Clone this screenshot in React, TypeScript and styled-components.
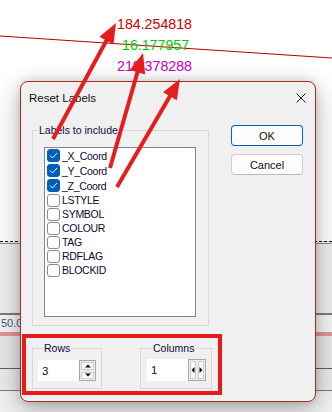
import React from "react";
import styled, { createGlobalStyle } from "styled-components";

const GlobalStyle = createGlobalStyle`
  html, body { margin: 0; padding: 0; background: #fff; }
  body { font-family: "Liberation Sans", Arial, sans-serif; }
`;

const values = [
  { text: "184.254818", color: "#c80000", x: 117, y: 16 },
  { text: "16.177957", color: "#00cc00", x: 122, y: 37 },
  { text: "219.378288", color: "#c400c4", x: 117, y: 58 },
];

const labels = [
  { name: "_X_Coord", checked: true },
  { name: "_Y_Coord", checked: true },
  { name: "_Z_Coord", checked: true },
  { name: "LSTYLE", checked: false },
  { name: "SYMBOL", checked: false },
  { name: "COLOUR", checked: false },
  { name: "TAG", checked: false },
  { name: "RDFLAG", checked: false },
  { name: "BLOCKID", checked: false },
];

// tail -> tip
const arrows = [
  [53, 139, 116, 23],
  [110, 168, 143, 53],
  [117, 187, 180, 79],
];

const arrowParts = (x1: number, y1: number, x2: number, y2: number) => {
  const dx = x2 - x1;
  const dy = y2 - y1;
  const len = Math.hypot(dx, dy);
  const ux = dx / len;
  const uy = dy / len;
  const bx = x2 - ux * 20;
  const by = y2 - uy * 20;
  const nx = -uy * 8;
  const ny = ux * 8;
  return {
    line: { x1, y1, x2: bx + ux * 2, y2: by + uy * 2 },
    head: `${x2},${y2} ${bx + nx},${by + ny} ${bx - nx},${by - ny}`,
  };
};

const Scene = styled.div`
  position: relative;
  width: 332px;
  height: 412px;
  overflow: hidden;
  background: #fff;
`;

const Backdrop = styled.div`
  display: flex;
  flex-direction: column;
  height: 100%;
`;

const CanvasArea = styled.div`
  position: relative;
  height: 241px;
  background: #fff;
  flex-shrink: 0;
`;

const ValueLabel = styled.span<{ $color: string }>`
  position: absolute;
  font-size: 14.2px;
  line-height: 16px;
  color: ${(p) => p.$color};
  white-space: nowrap;
`;

const LowerPanel = styled.div`
  display: flex;
  flex-direction: column;
  flex: 1;
  background: #f2f2f2;
`;

const DashRule = styled.div`
  height: 1px;
  border-top: 1px dashed #111;
  border-bottom: 1px solid #8a8a8a;
`;

const Band = styled.div<{ $h: number; $bg: string }>`
  height: ${(p) => p.$h}px;
  background: ${(p) => p.$bg};
  flex-shrink: 0;
`;

const ScaleRow = styled.div`
  height: 17px;
  background: #f6f6f6;
  font-size: 11px;
  line-height: 17px;
  color: #3d5b85;
  padding-left: 1px;
`;

const Dialog = styled.div`
  position: absolute;
  left: 20px;
  top: 81px;
  width: 296px;
  height: 321px;
  box-sizing: border-box;
  border: 1px solid #a3301d;
  border-radius: 8px;
  background: #f0f0f0;
  box-shadow: 0 8px 28px rgba(0, 0, 0, 0.3), 0 0 8px rgba(0, 0, 0, 0.14);
  display: flex;
  flex-direction: column;
`;

const TitleBar = styled.div`
  height: 31px;
  display: flex;
  align-items: center;
  justify-content: space-between;
  padding: 0 9px 0 8px;
  font-size: 11.5px;
  color: #111;
`;

const Body = styled.div`
  padding: 11px 11px 0 11px;
  display: flex;
  flex-direction: column;
`;

const TopRow = styled.div`
  display: flex;
  gap: 22px;
  align-items: flex-start;
`;

const Group = styled.fieldset<{ $w: number; $h?: number; $pad: string }>`
  margin: 0;
  width: ${(p) => p.$w}px;
  ${(p) => (p.$h ? `height: ${p.$h}px;` : "")}
  box-sizing: border-box;
  border: 1px solid #d8d8d8;
  padding: ${(p) => p.$pad};
  min-inline-size: 0;
`;

const Legend = styled.legend`
  margin-left: 5px;
  padding: 0 1px;
  font-size: 10.5px;
  line-height: 13px;
  color: #0c0c40;
`;

const ListBox = styled.div`
  margin: 10px 0 0 11px;
  width: 152px;
  height: 170px;
  box-sizing: border-box;
  border: 1px solid #828790;
  background: #fff;
  padding: 0 2px;
`;

const ItemRow = styled.div<{ $h: number }>`
  height: ${(p) => p.$h}px;
  display: flex;
  align-items: center;
  gap: 2px;
  font-size: 10.5px;
  letter-spacing: -0.3px;
  color: #0a0a30;
`;

const CheckBox = styled.span<{ $checked: boolean }>`
  width: 13px;
  height: 13px;
  box-sizing: border-box;
  border-radius: 3px;
  border: 1px solid ${(p) => (p.$checked ? "#005fb8" : "#8a8a8a")};
  background: ${(p) => (p.$checked ? "#005fb8" : "#fff")};
  display: flex;
  align-items: center;
  justify-content: center;
  flex-shrink: 0;
`;

const ButtonCol = styled.div`
  margin-top: 1px;
  display: flex;
  flex-direction: column;
  gap: 8px;
`;

const Button = styled.div<{ $primary?: boolean }>`
  width: 72px;
  height: 21px;
  box-sizing: border-box;
  border: 1px solid ${(p) => (p.$primary ? "#0067c0" : "#d0d0d0")};
  border-bottom-color: ${(p) => (p.$primary ? "#0058a8" : "#bcbcbc")};
  border-radius: 4px;
  background: #fdfdfd;
  font-size: 11px;
  color: #111;
  display: flex;
  align-items: center;
  justify-content: center;
`;

const BottomRow = styled.div`
  margin-top: 16px;
  display: flex;
  gap: 38px;
`;

const SpinField = styled.div`
  display: flex;
`;

const TextBox = styled.div<{ $w: number; $h: number }>`
  width: ${(p) => p.$w}px;
  height: ${(p) => p.$h}px;
  background: #fff;
  font-size: 11.5px;
  color: #111;
  padding-left: 4px;
  box-sizing: border-box;
  display: flex;
  align-items: center;
`;

const Spinner = styled.div<{ $horizontal?: boolean; $w: number; $h: number }>`
  width: ${(p) => p.$w}px;
  height: ${(p) => p.$h}px;
  box-sizing: border-box;
  border: 1px solid #a8a8a8;
  background: #ececec;
  display: flex;
  flex-direction: ${(p) => (p.$horizontal ? "row" : "column")};
`;

const SpinButton = styled.div`
  flex: 1;
  margin: 1px;
  border: 1px solid #cfcfcf;
  background: #f8f8f8;
  display: flex;
  align-items: center;
  justify-content: center;
`;

const ArrowLayer = styled.svg`
  position: absolute;
  left: 0;
  top: 0;
  pointer-events: none;
`;

const Highlight = styled.div`
  position: absolute;
  left: 22px;
  top: 334px;
  width: 200px;
  height: 61px;
  box-sizing: border-box;
  border: 4px solid #e81a1c;
  pointer-events: none;
`;

const Tri = ({ dir }: { dir: "up" | "down" | "left" | "right" }) => {
  const pts = {
    up: "0,3.5 3,0.5 6,3.5",
    down: "0,0.5 6,0.5 3,3.5",
    left: "3.5,0 3.5,6 0.5,3",
    right: "0.5,0 0.5,6 3.5,3",
  }[dir];
  const vertical = dir === "up" || dir === "down";
  return (
    <svg width={vertical ? 6 : 4} height={vertical ? 4 : 6}>
      <polygon points={pts} fill="#111" />
    </svg>
  );
};

export default function App() {
  return (
    <>
      <GlobalStyle />
      <Scene>
        <Backdrop>
          <CanvasArea>
            <svg width="332" height="241" style={{ position: "absolute", left: 0, top: 0 }}>
              <line x1="0" y1="36" x2="332" y2="58" stroke="#b00000" strokeWidth="1" />
            </svg>
            {values.map((v) => (
              <ValueLabel key={v.text} $color={v.color} style={{ left: v.x, top: v.y }}>
                {v.text}
              </ValueLabel>
            ))}
          </CanvasArea>
          <LowerPanel>
            <DashRule />
            <Band $h={69} $bg="#efefef" />
            <Band $h={2} $bg="#7c7c7c" />
            <ScaleRow>50.0</ScaleRow>
            <Band $h={4} $bg="#e39494" />
            <Band $h={32} $bg="#e8e8e8" />
            <Band $h={1} $bg="#5e5e5e" />
            <Band $h={21} $bg="#ebebeb" />
            <Band $h={1} $bg="#7c7c7c" />
          </LowerPanel>
        </Backdrop>

        <Dialog>
          <TitleBar>
            <span>Reset Labels</span>
            <svg width="10" height="10">
              <path d="M0.5 0.5 L9.5 9.5 M9.5 0.5 L0.5 9.5" stroke="#1a1a1a" strokeWidth="1" />
            </svg>
          </TitleBar>
          <Body>
            <TopRow>
              <Group $w={177} $h={202} $pad="0">
                <Legend>Labels to include</Legend>
                <ListBox>
                  {labels.map((l) => (
                    <ItemRow key={l.name} $h={l.checked ? 15 : 14}>
                      <CheckBox $checked={l.checked}>
                        {l.checked && (
                          <svg width="9" height="9">
                            <polyline points="1,4.5 3.5,7 8,2" fill="none" stroke="#fff" strokeWidth="1" />
                          </svg>
                        )}
                      </CheckBox>
                      {l.name}
                    </ItemRow>
                  ))}
                </ListBox>
              </Group>
              <ButtonCol>
                <Button $primary>OK</Button>
                <Button>Cancel</Button>
              </ButtonCol>
            </TopRow>
            <BottomRow>
              <Group $w={70} $pad="5px 5px 6px 5px">
                <Legend>Rows</Legend>
                <SpinField>
                  <TextBox $w={42} $h={21}>3</TextBox>
                  <Spinner $w={17} $h={21}>
                    <SpinButton>
                      <Tri dir="up" />
                    </SpinButton>
                    <SpinButton>
                      <Tri dir="down" />
                    </SpinButton>
                  </Spinner>
                </SpinField>
              </Group>
              <Group $w={72} $pad="4px 5px 7px 6px">
                <Legend>Columns</Legend>
                <SpinField>
                  <TextBox $w={41} $h={22}>1</TextBox>
                  <Spinner $horizontal $w={18} $h={22}>
                    <SpinButton>
                      <Tri dir="left" />
                    </SpinButton>
                    <SpinButton>
                      <Tri dir="right" />
                    </SpinButton>
                  </Spinner>
                </SpinField>
              </Group>
            </BottomRow>
          </Body>
        </Dialog>

        <ArrowLayer width="332" height="412">
          {arrows.map(([x1, y1, x2, y2], i) => {
            const a = arrowParts(x1, y1, x2, y2);
            return (
              <g key={i}>
                <line {...a.line} stroke="#e41e1e" strokeWidth="4" strokeLinecap="butt" />
                <polygon points={a.head} fill="#e41e1e" />
              </g>
            );
          })}
        </ArrowLayer>
        <Highlight />
      </Scene>
    </>
  );
}
